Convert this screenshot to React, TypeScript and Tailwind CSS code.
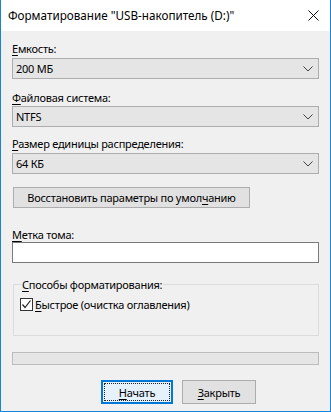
import React from "react";

function Chevron() {
  return (
    <svg width="10" height="6" viewBox="0 0 10 6" className="shrink-0">
      <path d="M0.5 0.5 L5 5 L9.5 0.5" fill="none" stroke="#404040" strokeWidth="1" />
    </svg>
  );
}

function Combo({ value }: { value: string }) {
  return (
    <div className="h-[21px] w-full flex items-center justify-between bg-[#e5e5e5] border border-[#adadad] pl-[3px] pr-[5px]">
      <span>{value}</span>
      <Chevron />
    </div>
  );
}

function U({ c }: { c: string }) {
  return <span className="underline underline-offset-[2px]">{c}</span>;
}

export default function App() {
  return (
    <div
      className="w-[331px] h-[412px] flex flex-col border-x border-b border-[#1883d7] text-[11px] tracking-[-0.25px] text-black overflow-hidden whitespace-nowrap"
      style={{ fontFamily: '"Noto Sans", sans-serif' }}
    >
      <div className="h-[31px] bg-white flex items-center justify-between pl-[7px] pr-[11px] shrink-0 text-[11.7px] tracking-normal">
        <span>Форматирование "USB-накопитель (D:)"</span>
        <svg width="11" height="11" viewBox="0 0 11 11">
          <path d="M0.5 0.5 L10.5 10.5 M10.5 0.5 L0.5 10.5" stroke="#111" strokeWidth="1" />
        </svg>
      </div>
      <div className="flex-1 bg-[#f0f0f0] flex flex-col px-[11px] pt-[10px] leading-[15px]">
        <div className="h-[15px]"><U c="Е" />мкость:</div>
        <div className="mt-[2px]"><Combo value="200 МБ" /></div>
        <div className="h-[15px] mt-[11px]"><U c="Ф" />айловая система:</div>
        <div className="mt-[1px]"><Combo value="NTFS" /></div>
        <div className="h-[15px] mt-[9px]"><U c="Р" />азмер единицы распределения:</div>
        <div className="mt-[2px]"><Combo value="64 КБ" /></div>
        <div className="mt-[13px] ml-[1px] w-[237px] h-[21px] flex items-center justify-center bg-[#e1e1e1] border border-[#adadad]">
          <span>Восстановить параметры по умол<U c="ч" />анию</span>
        </div>
        <div className="h-[15px] mt-[19px]"><U c="М" />етка тома:</div>
        <div className="h-[21px] bg-white border border-[#7a7a7a]" />
        <fieldset className="mt-[14px] ml-[1px] h-[59px] border border-[#dcdcdc] px-[6px]">
          <legend className="px-[1px] ml-[1px]"><U c="С" />пособы форматирования:</legend>
          <div className="flex items-center mt-[5px]">
            <div className="w-[13px] h-[13px] bg-white border border-[#333] flex items-center justify-center">
              <svg width="11" height="11" viewBox="0 0 11 11">
                <path d="M1.5 5.5 L4 8.5 L9.5 1.5" fill="none" stroke="#222" strokeWidth="1.2" />
              </svg>
            </div>
            <span className="ml-[2px]"><U c="Б" />ыстрое (очистка оглавления)</span>
          </div>
        </fieldset>
        <div className="mt-[16px] h-[13px] bg-[#e6e6e6] border border-[#bcbcbc]" />
        <div className="mt-[15px] flex justify-center gap-[9px] pl-[26px]">
          <div className="w-[72px] h-[24px] border-2 border-[#0078d7] bg-[#e5f1fb] p-[1px]">
            <div className="w-full h-full border border-dotted border-[#222] flex items-center justify-center">
              <span><U c="Н" />ачать</span>
            </div>
          </div>
          <div className="w-[74px] h-[24px] border border-[#adadad] bg-[#e1e1e1] flex items-center justify-center">
            <span><U c="З" />акрыть</span>
          </div>
        </div>
      </div>
    </div>
  );
}
